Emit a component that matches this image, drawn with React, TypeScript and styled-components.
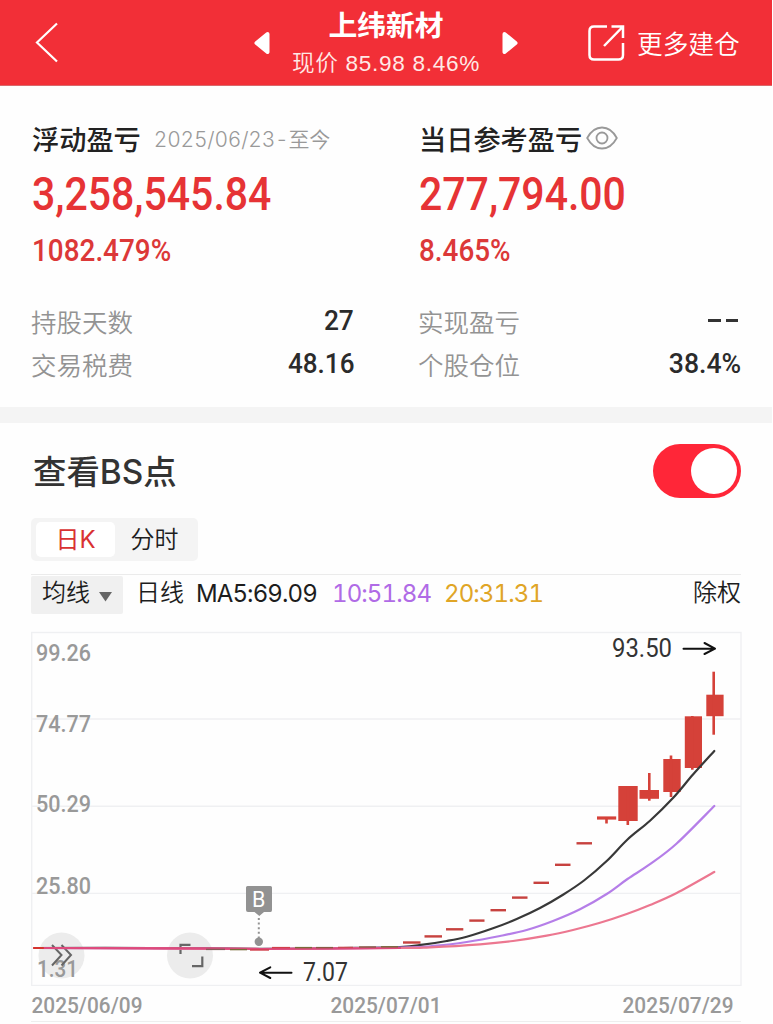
import React from "react";
import styled, { createGlobalStyle } from "styled-components";

const GlobalStyle = createGlobalStyle`
  * { box-sizing: border-box; }
  body {
    margin: 0;
    background: #fff;
    font-family: Inter, "Noto Sans CJK SC", sans-serif;
    font-variant-numeric: tabular-nums;
    color: #222;
  }
`;

const Page = styled.main`
  width: 772px;
  height: 1024px;
  overflow: hidden;
  background: #fefefe;
`;

/* Header */

const Header = styled.header`
  height: 86px;
  display: grid;
  grid-template-columns: 250px 273px 1fr;
  background: #f22f37;
  border-bottom: 1px solid #d9686b;
  color: #fff;
`;

const BackArea = styled.div`
  padding: 22px 0 0 34px;
`;

const StockSwitch = styled.div`
  display: flex;
  justify-content: space-between;
  padding: 0 3px 0 2px;
`;

const ArrowSlot = styled.div`
  padding-top: 31px;
  line-height: 0;
`;

const StockInfo = styled.div`
  display: flex;
  flex-direction: column;
  align-items: center;
  white-space: nowrap;
`;

const StockName = styled.h1`
  margin: 8px 0 0;
  font-size: 28.8px;
  line-height: 36px;
  font-weight: 700;
`;

const StockPrice = styled.div`
  margin-top: 4px;
  display: flex;
  align-items: center;
  font-family: "Liberation Sans", "Noto Sans CJK SC", sans-serif;
  font-size: 22.6px;
  letter-spacing: 0.7px;
  line-height: 32px;
  font-weight: 350;
  color: #ffe9e6;
`;

const MoreArea = styled.div`
  display: flex;
  align-items: center;
  padding-left: 64px;
  gap: 11px;
  font-size: 25.7px;
  font-weight: 350;
  white-space: nowrap;
`;

/* Text whose width is condensed or widened from its own edge */
const Fit = styled.span<{ $x: number; $from?: string }>`
  display: inline-block;
  white-space: nowrap;
  transform: scaleX(${(p) => p.$x});
  transform-origin: ${(p) => p.$from ?? "left"} center;
`;

/* Profit summary */

const Summary = styled.section`
  display: grid;
  grid-template-columns: 322px 322px;
  column-gap: 65px;
  padding: 34px 0 0 32px;
  height: 321px;
`;

const Column = styled.div`
  display: flex;
  flex-direction: column;
`;

const Heading = styled.div`
  display: flex;
  align-items: center;
  height: 36px;
  font-size: 27.2px;
  font-weight: 500;
  color: #222;
  white-space: nowrap;
`;

const Range = styled.span`
  margin-left: 13px;
  font-size: 21px;
  letter-spacing: -0.2px;
  font-weight: 350;
  color: #999;
`;

const EyeSlot = styled.span`
  margin-left: 4px;
  line-height: 0;
`;

const Amount = styled.div`
  margin-top: 8px;
  height: 60px;
  font: 500 47px/60px Roboto, sans-serif;
  color: #e63335;
`;

const Percent = styled.div`
  margin-top: 7px;
  height: 40px;
  font: 500 31.5px/40px Roboto, sans-serif;
  color: #dc3838;
`;

const Details = styled.dl`
  margin: 28px 0 0;
`;

const Detail = styled.div`
  height: 43px;
  display: flex;
  align-items: center;
  justify-content: space-between;
`;

const Term = styled.dt`
  margin-left: -1px;
  font-size: 25.5px;
  font-weight: 350;
  color: #939393;
`;

const Value = styled.dd`
  margin: 0;
  font: 500 28px/40px Roboto, sans-serif;
  color: #2b2b2b;
`;

const Dashes = styled.span`
  display: flex;
  gap: 5px;
  padding-right: 3px;
  &::before, &::after {
    content: "";
    width: 12.5px;
    height: 2.5px;
    background: #333;
  }
`;

const Band = styled.div`
  height: 16px;
  background: #f4f4f4;
`;

/* Chart section */

const ChartSection = styled.section`
  padding: 0 31px;
`;

const SwitchRow = styled.div`
  height: 95px;
  display: flex;
  align-items: center;
  justify-content: space-between;
  padding-left: 2px;
  color: #333;
`;

const SwitchLabel = styled.span`
  margin-top: -3px;
  font-size: 33.4px;
  font-weight: 500;
`;

const Latin = styled.span`
  font-weight: 450;
`;

const Toggle = styled.button`
  width: 88px;
  height: 54px;
  padding: 0 4px 0 0;
  border: 0;
  border-radius: 27px;
  display: flex;
  align-items: center;
  justify-content: flex-end;
  background: #ff2638;
  &::after {
    content: "";
    width: 46px;
    height: 46px;
    border-radius: 50%;
    background: #fff;
  }
`;

const Tabs = styled.div`
  width: 167px;
  height: 43px;
  padding: 4px 4px 4px 5px;
  display: flex;
  background: #f4f4f4;
  border-radius: 5px;
`;

const Tab = styled.button<{ $active?: boolean }>`
  width: 79px;
  padding: 0;
  border: 0;
  border-radius: 5px;
  font: inherit;
  font-size: 24px;
  line-height: 34px;
  font-weight: ${(p) => (p.$active ? 400 : 350)};
  color: ${(p) => (p.$active ? "#d93232" : "#1d1d1d")};
  background: ${(p) => (p.$active ? "#fff" : "transparent")};
`;

const Legend = styled.div`
  height: 40px;
  margin-top: 13px;
  padding-top: 1px;
  display: flex;
  align-items: center;
  border-top: 1px solid #ebebeb;
  font-size: 24px;
  line-height: 34px;
  font-weight: 350;
  color: #1d1d1d;
  white-space: nowrap;
`;

const Picker = styled.button`
  width: 92px;
  height: 38px;
  padding: 0 11px 4px 11px;
  border: 0;
  border-radius: 2px;
  display: flex;
  align-items: center;
  justify-content: space-between;
  background: #f0f0f0;
  font: inherit;
  color: inherit;
  svg { margin-top: 5px; }
`;

const LegendItem = styled.span`
  margin-left: 13px;
  padding-bottom: 4px;
`;

const Average = styled.span<{ $w: number; $color?: string }>`
  margin-left: 12px;
  padding-bottom: 3px;
  width: ${(p) => p.$w}px;
  letter-spacing: -0.9px;
  font-weight: 400;
  color: ${(p) => p.$color ?? "inherit"};
`;

const LegendEnd = styled.span`
  margin-left: auto;
  padding-bottom: 4px;
`;

const Plot = styled.svg`
  display: block;
  margin-top: 17px;
`;

const Dates = styled.div`
  height: 36px;
  display: grid;
  grid-template-columns: 299px 292px 119px;
  border-bottom: 1px solid #eee;
`;

const axisFont = { fontFamily: "Roboto, sans-serif", fontWeight: 500, fill: "#999" };

type Pt = [number, number];

/* Catmull-Rom spline through the given points */
const smooth = (p: Pt[]) => {
  let d = `M${p[0][0]} ${p[0][1]}`;
  for (let i = 0; i < p.length - 1; i++) {
    const a = p[i - 1] ?? p[i];
    const b = p[i];
    const c = p[i + 1];
    const e = p[i + 2] ?? c;
    d += `C${b[0] + (c[0] - a[0]) / 6} ${b[1] + (c[1] - a[1]) / 6} ${c[0] - (e[0] - b[0]) / 6} ${c[1] - (e[1] - b[1]) / 6} ${c[0]} ${c[1]}`;
  }
  return d;
};

const ma5: Pt[] = [
  [34, 948], [150, 948], [260, 948.8], [340, 948], [400, 947], [423, 944.7], [446.7, 941], [466.7, 936.7],
  [493, 928.3], [516.7, 919], [540, 908], [563, 894.7], [584, 880.5], [606.7, 861], [627.5, 839.5],
  [650, 820.7], [673, 798], [693, 774.5], [714.3, 751],
];
const ma10: Pt[] = [
  [34, 948], [150, 948.3], [260, 949], [400, 947.7], [436.7, 945.7], [466.7, 942], [500, 936], [526.7, 930],
  [553, 921], [580, 909.3], [606.7, 894], [627.5, 879], [650, 864.2], [676.7, 843.5], [714.3, 806],
];
const ma20: Pt[] = [
  [34, 948], [150, 948.4], [260, 949], [400, 948], [430, 947.3], [480, 944.3], [513, 941], [546.7, 935.7],
  [573, 930], [600, 922.8], [626.7, 914], [650, 905], [676.7, 893], [714.3, 872],
];

/* left, right, top, bottom, wick x, wick top, wick bottom */
const candles = [
  [597, 616.2, 816.4, 819.6, 606.5, 818, 823.5],
  [618.3, 637.7, 786, 821, 627.8, 786, 825],
  [639.5, 659, 790, 798.8, 649.3, 773, 800.7],
  [663.3, 680.7, 759, 792, 671, 755.5, 797],
  [684.8, 702, 716.3, 768, 692.3, 716, 769.7],
  [706.3, 723.6, 694.7, 716.2, 713.7, 671.7, 734.7],
];

/* left, right, y */
const limits = [
  [576.5, 592, 843.3], [555, 570.5, 864.8], [533.5, 549, 882.8], [512, 527.5, 897.6], [490.5, 506, 910.2],
  [469.3, 484.5, 920.6], [446, 463.3, 929.3], [424.5, 442, 936.4], [403, 420.5, 942.5],
];

const flats: [number, number, number, string][] = [
  [381, 398, 946.8, "#7b6a3a"], [359, 376, 947, "#8a5a44"], [338, 353, 947.4, "#c94b55"],
  [316, 333, 947.6, "#8a5a44"], [295, 312, 947.6, "#7b6a3a"], [272, 290, 947.6, "#d0404c"],
  [250, 269, 950, "#d0404c"], [230, 247, 949.6, "#7b6a3a"], [206, 225, 949.4, "#8a5a5a"],
];

const AxisLabel = ({ y, children }: { y: number; children: string }) => (
  <text x="36" y={y} textLength="55" lengthAdjust="spacingAndGlyphs">
    {children}
  </text>
);

const PriceChart = () => (
  <Plot width="711" height="355" viewBox="31 631 711 355">
    <g fill="none" stroke="#eff0f2" strokeWidth="1.4">
      <rect x="31.7" y="632.5" width="709.3" height="353" />
      <path d="M32 719H741M32 806.2H741M32 893.4H741" />
    </g>
    <circle cx="61.5" cy="955.5" r="23" fill="#ececec" />
    <circle cx="190" cy="955.5" r="23" fill="#ececec" />
    <g fontSize="24" {...axisFont}>
      <AxisLabel y={661.3}>99.26</AxisLabel>
      <AxisLabel y={732.2}>74.77</AxisLabel>
      <AxisLabel y={812.2}>50.29</AxisLabel>
      <AxisLabel y={894.4}>25.80</AxisLabel>
      <text x="37" y="976.7" textLength="41" lengthAdjust="spacingAndGlyphs">1.31</text>
    </g>
    <path d="M52 945L61.5 955L52 965.5M61.5 945L71 955L61.5 965.5" fill="none" stroke="#666" strokeWidth="2" />
    <path d="M180.5 954V944.8H190.5M202.3 956.5V966.2H192" fill="none" stroke="#666" strokeWidth="2.2" />
    {limits.map(([l, r, y]) => (
      <rect key={l} x={l} y={y - 1.2} width={r - l} height="2.4" fill="#c7423f" />
    ))}
    {candles.map(([l, r, t, b, x, wt, wb]) => (
      <g key={l} fill="#d54139">
        <rect x={l} y={t} width={r - l} height={b - t} />
        <rect x={x - 1.3} y={wt} width="2.6" height={wb - wt} />
      </g>
    ))}
    <g fill="none" strokeWidth="2.2" strokeLinecap="round">
      <path d={smooth(ma5)} stroke="#383838" />
      <path d={smooth(ma10)} stroke="#b57ee8" />
      <path d={smooth(ma20)} stroke="#ec7790" />
      <path d="M42 948L190 948.3L260 949L400 948" stroke="#dd4a7c" />
      <path d="M34 948H43" stroke="#d5342e" />
    </g>
    {flats.map(([l, r, y, c]) => (
      <rect key={l} x={l} y={y - 0.7} width={r - l} height="1.4" fill={c} />
    ))}
    <path d="M247.5 886H270.5Q272 886 272 887.5V910Q272 912 270.5 912H264L259.3 916L254.5 912H248Q246 912 246 910V887.5Q246 886 247.5 886Z" fill="#929292" />
    <text x="258.8" y="906.5" textAnchor="middle" fontFamily="Roboto, sans-serif" fontSize="21.5" fill="#fff">B</text>
    <path d="M258.8 918V938" stroke="#929292" strokeWidth="2" strokeDasharray="2 2.6" />
    <circle cx="258.8" cy="941.7" r="4.2" fill="#929292" />
    <g fontFamily="Roboto, sans-serif" fontSize="25" fill="#333">
      <text x="612" y="657" textLength="60" lengthAdjust="spacingAndGlyphs">93.50</text>
      <text x="303" y="981" textLength="45" lengthAdjust="spacingAndGlyphs">7.07</text>
    </g>
    <g fill="none" stroke="#111" strokeWidth="2" strokeLinecap="round" strokeLinejoin="round">
      <path d="M683.5 648.7H714M704.5 643L715 648.7L704.5 654" />
      <path d="M291.5 972.7H261M270.3 967.3L260 972.7L270.3 978" />
    </g>
  </Plot>
);

const DateText = ({ children }: { children: string }) => (
  <svg width="117" height="35" viewBox="0 0 117 35">
    <text x="0.5" y="26.5" fontSize="21.5" textLength="111" lengthAdjust="spacingAndGlyphs" {...axisFont}>
      {children}
    </text>
  </svg>
);

export default function App() {
  return (
    <>
      <GlobalStyle />
      <Page>
        <Header>
          <BackArea>
            <svg width="26" height="42" viewBox="0 0 26 42" fill="none" stroke="#fff" strokeWidth="2.2">
              <path d="M23 1.5L3 20.5L23 39.5" />
            </svg>
          </BackArea>
          <StockSwitch>
            <ArrowSlot>
              <svg width="20" height="24" viewBox="0 0 20 24">
                <path d="M15.5 3L4.5 12L15.5 21Z" fill="#fff" stroke="#fff" strokeWidth="4" strokeLinejoin="round" />
              </svg>
            </ArrowSlot>
            <StockInfo>
              <StockName>上纬新材</StockName>
              <StockPrice>现价&nbsp;85.98 8.46%</StockPrice>
            </StockInfo>
            <ArrowSlot>
              <svg width="20" height="24" viewBox="0 0 20 24">
                <path d="M4.5 3L15.5 12L4.5 21Z" fill="#fff" stroke="#fff" strokeWidth="4" strokeLinejoin="round" />
              </svg>
            </ArrowSlot>
          </StockSwitch>
          <MoreArea>
            <svg width="39" height="38" viewBox="0 0 39 38" fill="none" stroke="#fff" strokeWidth="2.5">
              <path d="M20 2.5H7Q2.5 2.5 2.5 7V31Q2.5 35.5 7 35.5H31.5Q36 35.5 36 31V19" />
              <path d="M24.5 2.5H36V14M36 2.5L17 22" />
            </svg>
            更多建仓
          </MoreArea>
        </Header>

        <Summary>
          <Column>
            <Heading>
              浮动盈亏<Range>2025/06/23-至今</Range>
            </Heading>
            <Amount><Fit $x={0.872}>3,258,545.84</Fit></Amount>
            <Percent><Fit $x={0.885}>1082.479%</Fit></Percent>
            <Details>
              <Detail>
                <Term>持股天数</Term>
                <Value><Fit $x={0.94} $from="right">27</Fit></Value>
              </Detail>
              <Detail>
                <Term>交易税费</Term>
                <Value><Fit $x={0.93} $from="right">48.16</Fit></Value>
              </Detail>
            </Details>
          </Column>
          <Column>
            <Heading>
              当日参考盈亏
              <EyeSlot>
                <svg width="32" height="24" viewBox="0 0 32 24" fill="none" stroke="#999" strokeWidth="1.8">
                  <path d="M1.2 12C5 5 10 1.5 16 1.5S27 5 30.8 12C27 19 22 22.5 16 22.5S5 19 1.2 12Z" />
                  <circle cx="16" cy="12" r="5.5" />
                </svg>
              </EyeSlot>
            </Heading>
            <Amount><Fit $x={0.872}>277,794.00</Fit></Amount>
            <Percent><Fit $x={0.885}>8.465%</Fit></Percent>
            <Details>
              <Detail>
                <Term>实现盈亏</Term>
                <Value><Dashes aria-label="--" /></Value>
              </Detail>
              <Detail>
                <Term>个股仓位</Term>
                <Value><Fit $x={0.95} $from="right">38.4%</Fit></Value>
              </Detail>
            </Details>
          </Column>
        </Summary>

        <Band />

        <ChartSection>
          <SwitchRow>
            <SwitchLabel>查看<Latin>BS</Latin>点</SwitchLabel>
            <Toggle aria-label="查看BS点" />
          </SwitchRow>
          <Tabs>
            <Tab $active>日K</Tab>
            <Tab>分时</Tab>
          </Tabs>
          <Legend>
            <Picker>
              均线
              <svg width="13" height="12" viewBox="0 0 13 12">
                <path d="M0 2H13L6.5 11.5Z" fill="#666" />
              </svg>
            </Picker>
            <LegendItem>日线</LegendItem>
            <Average $w={124}>MA5:69.09</Average>
            <Average $w={100} $color="#b06be6">10:51.84</Average>
            <Average $w={100} $color="#e0a526">20:31.31</Average>
            <LegendEnd>除权</LegendEnd>
          </Legend>
          <PriceChart />
          <Dates>
            <DateText>2025/06/09</DateText>
            <DateText>2025/07/01</DateText>
            <DateText>2025/07/29</DateText>
          </Dates>
        </ChartSection>
      </Page>
    </>
  );
}
